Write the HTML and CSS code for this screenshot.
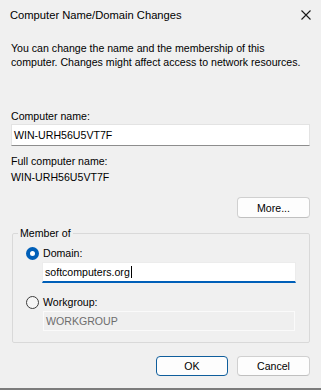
FILE: index.html
```html
<!DOCTYPE html>
<html lang="en">
<head>
    <meta charset="UTF-8">
    <meta name="viewport" content="width=device-width, initial-scale=1.0">
    <title>Computer Name/Domain Changes</title>
    <link rel="stylesheet" href="styles.css">
</head>
<body>
    <div class="dialog">
        <div class="titlebar">
            <span class="title">Computer Name/Domain Changes</span>
            <svg class="close" width="10" height="10" viewBox="0 0 10 10">
                <path d="M0.5 0.5 L9.5 9.5 M9.5 0.5 L0.5 9.5" stroke="#1a1a1a" stroke-width="1.1" fill="none"/>
            </svg>
        </div>

        <div class="content">
            <p class="desc">You can change the name and the membership of this<br>computer. Changes might affect access to network resources.</p>

            <div class="label name-label">Computer name:</div>
            <div class="field name-field">WIN-URH56U5VT7F</div>

            <div class="label full-label">Full computer name:</div>
            <div class="label full-value">WIN-URH56U5VT7F</div>

            <div class="more-row"><button class="btn more">More...</button></div>

            <fieldset class="group">
                <legend>Member of</legend>

                <div class="radio-row">
                    <span class="radio checked"></span>
                    <span>Domain:</span>
                </div>
                <div class="field domain-field">softcomputers.org<span class="caret"></span></div>

                <div class="radio-row workgroup-row">
                    <span class="radio"></span>
                    <span>Workgroup:</span>
                </div>
                <div class="field workgroup-field">WORKGROUP</div>
            </fieldset>

            <div class="actions">
                <button class="btn ok">OK</button>
                <button class="btn cancel">Cancel</button>
            </div>
        </div>
    </div>
</body>
</html>
```

FILE: styles.css
```css
html, body { margin: 0; padding: 0; }
body { font-family: 'Liberation Sans', Arial, sans-serif; font-size: 10.6px; color: #000; background: #f0f0f0; }
.dialog { width: 321px; height: 390px; box-sizing: border-box; background: #f0f0f0; border-bottom: 2px solid #7c7c7c; overflow: hidden; }

.titlebar { height: 30px; display: flex; align-items: center; justify-content: space-between; padding: 0 10px 0 10px; }
.title { font-size: 11.2px; line-height: 30px; }
.close { display: block; }

.content { padding: 0 11px; }
.desc { margin: 11px 0 0 0; line-height: 14px; white-space: nowrap; }

.label { line-height: 14px; }
.name-label { margin-top: 40px; }
.full-label { margin-top: 8px; }
.full-value { margin-top: 2px; }

.field { box-sizing: border-box; background: #fff; line-height: 19px; padding: 0 2px; }
.name-field { margin-top: 1px; height: 22px; line-height: 21px; border: 1px solid #e3e3e3; border-bottom-color: #8d8d8d; }

.more-row { display: flex; justify-content: flex-end; margin-top: 13px; }
.btn { font-family: inherit; font-size: 10.6px; color: #000; background: #fdfdfd; border: 1px solid #d0d0d0; border-bottom-color: #c0c0c0; border-radius: 4px; height: 20px; padding: 0; margin: 0; }
.more { width: 73px; height: 21px; }

.group { margin: 8px 0 0 1px; padding: 6px 13px 11px 13px; border: 1px solid #d9d9d9; border-radius: 2px; width: 298px; box-sizing: border-box; }
.group legend { padding: 0 2px; margin-left: -8px; line-height: 14px; }

.radio-row { display: flex; align-items: center; gap: 4px; height: 14px; }
.workgroup-row { margin-top: 12px; }
.radio { width: 13px; height: 13px; box-sizing: border-box; border-radius: 50%; border: 1px solid #3c3c3c; background: #f6f6f6; }
.radio.checked { border: 4px solid #005fb8; background: #fff; }

.domain-field { margin: 2px 0 0 16px; width: 254px; height: 21px; border: 1px solid #ececec; border-bottom: 2px solid #005fb8; }
.caret { display: inline-block; width: 1px; height: 12px; background: #000; vertical-align: -2px; margin-left: 1px; }
.workgroup-field { margin: 2px 0 0 17px; width: 252px; height: 20px; background: #efefef; border: 1px solid #fafafa; color: #6d6d6d; }

.actions { display: flex; justify-content: flex-end; gap: 9px; margin-top: 13px; }
.ok { width: 72px; border: 1px solid #0f5e9c; }
.cancel { width: 73px; }
```
